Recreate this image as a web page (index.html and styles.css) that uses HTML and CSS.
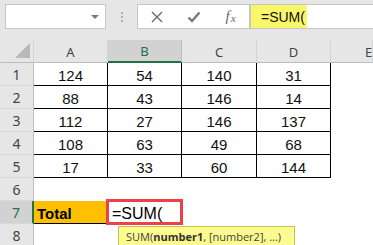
FILE: index.html
```html
<!DOCTYPE html>
<html>
<head>
<meta charset="utf-8">
<link rel="stylesheet" href="styles.css">
</head>
<body>
<div class="toolbar">
  <div class="namebox"><span class="caret"></span></div>
  <div class="dots"><i></i><i></i><i></i></div>
  <div class="btnbox">
    <span class="slot"><svg width="12" height="12" viewBox="0 0 12 12"><path d="M1 1L11 11M11 1L1 11" stroke="#6a6a6a" stroke-width="1.4" fill="none"/></svg></span>
    <span class="slot"><svg width="14" height="12" viewBox="0 0 14 12"><path d="M1.5 6.5L5 10L12.5 1.5" stroke="#7a7a7a" stroke-width="2.4" fill="none"/></svg></span>
    <span class="slot fx"><span class="f">f</span><span class="x">x</span></span>
  </div>
  <div class="formula"><span class="hl">=SUM(</span></div>
</div>
<div class="sheet">
  <div class="corner"><span class="tri"></span></div>
  <div class="ch">A</div><div class="ch sel">B</div><div class="ch">C</div><div class="ch">D</div><div class="ch last">E</div>

  <div class="rh">1</div><div class="d">124</div><div class="d">54</div><div class="d">140</div><div class="d">31</div><div class="e"></div>
  <div class="rh">2</div><div class="d">88</div><div class="d">43</div><div class="d">146</div><div class="d">14</div><div class="e"></div>
  <div class="rh">3</div><div class="d">112</div><div class="d">27</div><div class="d">146</div><div class="d">137</div><div class="e"></div>
  <div class="rh">4</div><div class="d">108</div><div class="d">63</div><div class="d">49</div><div class="d">68</div><div class="e"></div>
  <div class="rh">5</div><div class="d">17</div><div class="d">33</div><div class="d">60</div><div class="d">144</div><div class="e"></div>
  <div class="rh">6</div><div class="e"></div><div class="e"></div><div class="e"></div><div class="e"></div><div class="e"></div>
  <div class="rh sel">7</div><div class="total">Total</div><div class="edit">=SUM(</div><div class="e"></div><div class="e"></div><div class="e"></div>
  <div class="rh">8</div><div class="e"></div><div class="e"></div><div class="e"></div><div class="e"></div><div class="e"></div>

  <div class="redbox"></div>
  <div class="tip">SUM(<b>number1</b>, [number2], ...)</div>
</div>
</body>
</html>
```
FILE: styles.css
```css
* { box-sizing: border-box; }
html, body { margin: 0; padding: 0; }
body {
  width: 373px;
  height: 245px;
  overflow: hidden;
  background: #ffffff;
  font-family: "Liberation Sans", Arial, sans-serif;
}
.toolbar {
  height: 40px;
  background: #e6e6e6;
  display: flex;
  align-items: flex-start;
  padding-top: 4px;
}
.namebox {
  margin-left: 5px;
  width: 101px;
  height: 25px;
  background: #fff;
  border: 1px solid #c6c6c6;
  display: flex;
  align-items: center;
  justify-content: flex-end;
  padding-right: 6px;
}
.caret {
  width: 0; height: 0;
  border-left: 4px solid transparent;
  border-right: 4px solid transparent;
  border-top: 4px solid #7a7a7a;
}
.dots {
  width: 31px;
  height: 25px;
  display: flex;
  flex-direction: column;
  align-items: center;
  justify-content: center;
  gap: 2px;
}
.dots i {
  display: block;
  width: 2px;
  height: 2px;
  background: #b0b0b0;
}
.btnbox {
  width: 113px;
  height: 25px;
  background: #fff;
  border: 1px solid #c6c6c6;
  display: flex;
  padding-left: 0;
}
.slot {
  width: 37px;
  height: 23px;
  display: flex;
  align-items: center;
  justify-content: center;
}
.fx {
  font-family: "Liberation Serif", "Times New Roman", serif;
  font-style: italic;
  color: #6a6a6a;
}
.fx .f { font-size: 15px; }
.fx .x { font-size: 11px; margin-left: 1px; margin-top: 3px; }
.formula {
  flex: 1;
  height: 25px;
  background: #fff;
  border: 1px solid #c6c6c6;
  border-right: none;
}
.hl {
  display: flex;
  align-items: center;
  width: 56px;
  height: 23px;
  background: #f9f66a;
  padding-left: 10px;
  font-size: 14px;
  color: #111;
}
.sheet {
  position: relative;
  display: grid;
  grid-template-columns: 34px 74px 74px 75px 74px 1fr;
  grid-auto-rows: 23px;
  font-size: 15px;
  color: #111;
}
.corner {
  background: #e6e6e6;
  border-right: 1px solid #d4d4d4;
  border-bottom: 1px solid #bcbcbc;
  position: relative;
}
.tri {
  position: absolute;
  left: 15px;
  top: 3px;
  width: 0; height: 0;
  border-left: 15px solid transparent;
  border-bottom: 15px solid #b8b8b8;
}
.ch {
  background: #e6e6e6;
  border-right: 1px solid #d4d4d4;
  border-bottom: 1px solid #bcbcbc;
  display: flex;
  align-items: center;
  justify-content: center;
  font-family: "Noto Sans", "Open Sans", sans-serif;
  font-size: 13px;
  color: #444;
  padding-top: 1px;
}
.ch.last { justify-content: flex-start; padding-left: 34px; }
.ch.sel {
  background: #d2d2d2;
  border-bottom: 2px solid #217346;
  color: #217346;
  border-right-color: #c0c0c0;
}
.rh {
  background: #e6e6e6;
  border-right: 1px solid #bcbcbc;
  border-bottom: 1px solid #d8d8d8;
  display: flex;
  align-items: center;
  justify-content: center;
  font-family: "Noto Sans", "Open Sans", sans-serif;
  font-size: 14px;
  color: #444;
  padding-top: 1px;
}
.rh.sel {
  background: #d2d2d2;
  color: #217346;
  border-right: 2px solid #217346;
}
.d {
  border-right: 1px solid #000;
  border-bottom: 1px solid #000;
  display: flex;
  align-items: center;
  justify-content: center;
  padding-top: 2px;
}
.e { }
.total {
  background: #ffc000;
  border-bottom: 1px solid #000;
  font-weight: bold;
  display: flex;
  align-items: center;
  padding-left: 3px;
  padding-top: 2px;
  color: #000;
}
.edit {
  display: flex;
  align-items: center;
  padding-left: 4px;
  padding-top: 2px;
  font-size: 16px;
  color: #000;
}
.redbox {
  position: absolute;
  left: 106px;
  top: 159px;
  width: 77px;
  height: 26px;
  border: 3px solid #ec4148;
}
.tip {
  position: absolute;
  left: 118px;
  top: 186px;
  width: 177px;
  height: 22px;
  background: #fbfb8f;
  border: 1px solid #c9c24e;
  font-family: "Open Sans", "Noto Sans", sans-serif;
  font-size: 11px;
  color: #444;
  padding-left: 7px;
  padding-top: 2px;
  white-space: nowrap;
}
.tip b { font-weight: bold; color: #333; }
```
